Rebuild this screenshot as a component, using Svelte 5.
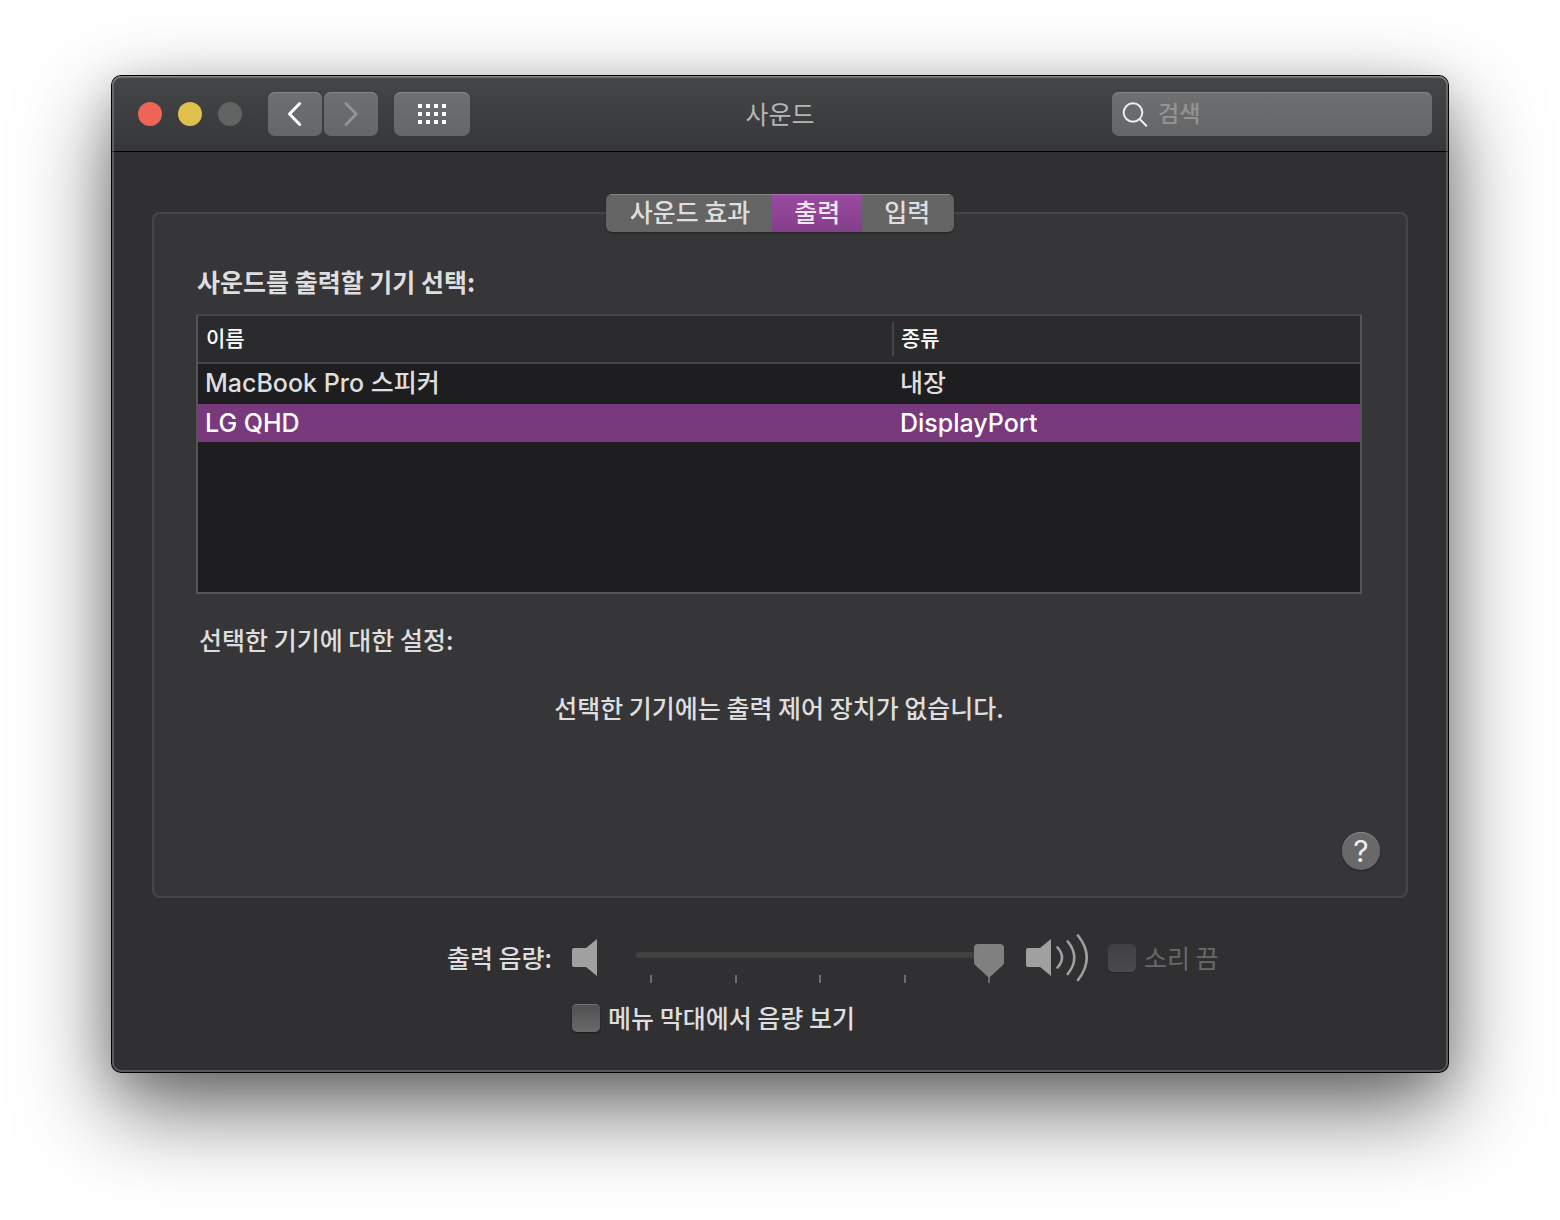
<script>
  const tabs = ['사운드 효과', '출력', '입력'];
  const devices = [
    { name: 'MacBook Pro 스피커', kind: '내장' },
    { name: 'LG QHD', kind: 'DisplayPort' }
  ];
  const gridDots = [0, 8, 16, 24].flatMap((x) => [0, 8, 16].map((y) => ({ x, y })));

  let activeTab = $state('출력');
  let selected = $state('LG QHD');
  let volume = $state(100);
</script>

<div class="desktop">
  <main class="window">
    <header class="toolbar">
      <div class="controls">
        <div class="lights">
          <button class="light close" aria-label="닫기"></button>
          <button class="light minimize" aria-label="최소화"></button>
          <button class="light zoom" aria-label="확대" disabled></button>
        </div>
        <div class="nav">
          <button class="tool" aria-label="뒤로">
            <svg width="16" height="26" viewBox="0 0 16 26" fill="none" stroke="#fff" stroke-width="3" stroke-linecap="round" stroke-linejoin="round"><path d="M12.700 2.500 2.500 13l10.200 10.500" /></svg>
          </button>
          <button class="tool" aria-label="앞으로" disabled>
            <svg width="16" height="26" viewBox="0 0 16 26" fill="none" stroke="#929394" stroke-width="3" stroke-linecap="round" stroke-linejoin="round"><path d="M3 2.500 13.200 13 3 23.500" /></svg>
          </button>
        </div>
        <button class="tool all" aria-label="모두 보기">
          <svg width="28" height="20" viewBox="0 0 28 20" fill="#fff">
            {#each gridDots as dot}
              <rect x={dot.x} y={dot.y} width="4" height="4" />
            {/each}
          </svg>
        </button>
      </div>
      <h1>사운드</h1>
      <label class="search">
        <svg width="26" height="26" viewBox="0 0 26 26" fill="none" stroke="#ededed" stroke-width="2"><circle cx="11" cy="11.500" r="9.300" /><path d="m17.500 18 7.300 7.300" /></svg>
        <input type="search" placeholder="검색" aria-label="검색" />
      </label>
    </header>

    <div class="content">
      <div class="tabs" role="tablist">
        {#each tabs as tab}
          <button role="tab" aria-selected={activeTab === tab} class:active={activeTab === tab} onclick={() => (activeTab = tab)}>{tab}</button>
        {/each}
      </div>

      <section class="panel">
        <div class="inner">
          <h2>사운드를 출력할 기기 선택:</h2>
          <div class="list">
            <table>
              <thead>
                <tr><th class="name">이름</th><th class="kind"><span>종류</span></th></tr>
              </thead>
              <tbody>
                {#each devices as device}
                  <tr class:selected={selected === device.name} onclick={() => (selected = device.name)}>
                    <td>{device.name}</td><td>{device.kind}</td>
                  </tr>
                {/each}
              </tbody>
            </table>
          </div>
          <p class="settings">선택한 기기에 대한 설정:</p>
          <p class="message">선택한 기기에는 출력 제어 장치가 없습니다.</p>
        </div>
        <button class="help" aria-label="도움말">?</button>
      </section>

      <div class="output">
        <label class="caption" for="volume">출력 음량:</label>
        <div class="volume">
          <svg width="26" height="48" viewBox="0 0 26 48" fill="#a0a0a0"><path d="M2 14h12L25 5v37L14 33H2a2 2 0 0 1-2-2V16a2 2 0 0 1 2-2z" /></svg>
          <div class="slider">
            <input id="volume" type="range" min="0" max="100" bind:value={volume} />
            <div class="ticks" aria-hidden="true"><i></i><i></i><i></i><i></i><i></i></div>
          </div>
          <svg width="64" height="48" viewBox="0 0 64 48" fill="#a0a0a0">
            <path d="M2 14h12L25 5v37L14 33H2a2 2 0 0 1-2-2V16a2 2 0 0 1 2-2z" />
            <path d="M31.500 13.500q9 10 0 20M41.800 7.500q13 16 0 32.500M52 1.500q17.500 22 0 44.500" fill="none" stroke="#a0a0a0" stroke-width="2.600" stroke-linecap="round" />
          </svg>
          <label class="check off"><input type="checkbox" disabled /><span>소리 끔</span></label>
        </div>
        <label class="check menu"><input type="checkbox" /><span>메뉴 막대에서 음량 보기</span></label>
      </div>
    </div>
  </main>
</div>

<style>
  :global(body) {
    background: #fff;
  }
  .desktop {
    padding: 76px 112px 148px;
    font-family: 'Noto Sans CJK KR', sans-serif;
    font-size: 25px;
    font-weight: 500;
    line-height: 30px;
    color: #dededf;
  }
  h1,
  h2,
  p {
    margin: 0;
    font-size: inherit;
  }
  button,
  input {
    font: inherit;
    color: inherit;
    margin: 0;
    padding: 0;
    border: 0;
  }
  svg {
    display: block;
    flex: none;
  }
  .window {
    position: relative;
    border-radius: 9px;
    background: #303032;
    box-shadow:
      0 0 0 1px #000,
      0 10px 40px rgba(0, 0, 0, 0.15),
      0 36px 90px rgba(0, 0, 0, 0.6);
  }
  /* Light rim over the inside edge of the window */
  .window::after {
    content: '';
    position: absolute;
    inset: 0;
    border-radius: 9px;
    box-shadow:
      inset 0 1px 0 #858686,
      inset 0 0 0 2px rgba(255, 255, 255, 0.2);
    pointer-events: none;
  }
  .toolbar {
    display: grid;
    grid-template-columns: 1fr auto 1fr;
    align-items: center;
    box-sizing: border-box;
    height: 76px;
    padding: 0 16px;
    border-bottom: 1px solid #000;
    border-radius: 9px 9px 0 0;
    background: linear-gradient(#454647, #363738);
  }
  .controls {
    display: flex;
    align-items: center;
    padding-left: 10px;
  }
  .lights {
    display: flex;
    gap: 16px;
    margin-right: 26px;
  }
  .light {
    width: 24px;
    height: 24px;
    border-radius: 50%;
  }
  .close {
    background: #ee6558;
  }
  .minimize {
    background: #e0c04c;
  }
  .zoom {
    background: #626363;
  }
  .nav {
    display: flex;
    gap: 2px;
    margin-right: 16px;
  }
  .tool {
    display: flex;
    align-items: center;
    justify-content: center;
    width: 54px;
    height: 44px;
    border-radius: 7px;
  }
  .tool,
  .search {
    background: linear-gradient(#6e6f71, #656667);
    box-shadow: inset 0 1px 0 #858688;
  }
  .all {
    width: 76px;
  }
  h1 {
    padding-bottom: 2px;
    font-weight: 400;
    color: #b4b5b5;
  }
  .search {
    display: flex;
    justify-self: end;
    align-items: center;
    gap: 10px;
    box-sizing: border-box;
    width: 320px;
    height: 44px;
    padding: 0 10px;
    border-radius: 7px;
    font-size: 23px;
  }
  .search input {
    flex: 1;
    min-width: 0;
    height: 34px;
    padding-bottom: 4px;
    background: none;
    outline: none;
    appearance: none;
  }
  .search input::placeholder {
    color: #929394;
    opacity: 1;
  }
  .content {
    padding: 42px 40px 38px;
  }
  .tabs {
    position: relative;
    display: flex;
    width: max-content;
    margin: 0 auto -20px;
    border-radius: 6px;
    box-shadow: 0 1px 2px rgba(0, 0, 0, 0.4);
    overflow: hidden;
  }
  .tabs button {
    height: 38px;
    padding: 0 22px 4px;
    background: #646465;
    box-shadow: inset 0 1px 0 #858586;
  }
  .tabs button:first-child {
    padding-left: 24px;
  }
  .tabs button:last-child {
    padding-right: 24px;
  }
  .tabs .active {
    background: linear-gradient(#9b4aa1, #843f89);
    box-shadow: inset 0 1px 0 #ac6ab1;
    color: #f0e6f1;
  }
  .panel {
    display: flex;
    flex-direction: column;
    padding: 52px 26px 26px 24px;
    border: 2px solid #464648;
    border-radius: 8px;
    background: #363638;
  }
  .inner {
    padding: 0 18px;
  }
  h2 {
    margin-bottom: 18px;
    padding-left: 1px;
    font-weight: 700;
  }
  .list {
    box-sizing: border-box;
    min-height: 280px;
    border: 2px solid #555557;
    border-top-color: #464648;
    background: #1e1e20;
  }
  table {
    width: 100%;
    border-spacing: 0;
    table-layout: fixed;
  }
  th {
    box-sizing: border-box;
    height: 48px;
    padding: 0;
    border-bottom: 2px solid #464648;
    background: #2b2b2d;
    text-align: left;
    font-size: 21px;
    font-weight: 500;
    color: #fff;
  }
  .name {
    padding: 0 0 4px 8px;
  }
  .kind {
    width: 468px;
  }
  .kind span {
    display: block;
    padding: 0 0 4px 7px;
    border-left: 2px solid #464648;
  }
  td {
    height: 38px;
    padding: 0 7px;
    border-bottom: 2px solid transparent;
    background-clip: padding-box;
    font-family: Inter, 'Noto Sans CJK KR', sans-serif;
  }
  td:last-child {
    padding-left: 8px;
  }
  .selected td {
    background-color: #78397d;
    color: #fff;
  }
  .settings {
    margin: 30px 0 38px 3px;
  }
  .message {
    text-align: center;
  }
  .help {
    align-self: flex-end;
    width: 38px;
    height: 38px;
    margin-top: 110px;
    border-radius: 50%;
    background: #69696b;
    box-shadow:
      inset 0 1px 0 #858587,
      0 1px 2px rgba(0, 0, 0, 0.4);
    font-family: Inter, sans-serif;
    font-size: 30px;
    font-weight: 400;
    color: #f0f0f0;
  }
  .output {
    display: grid;
    grid-template-columns: 400fr 836fr;
    gap: 20px;
    align-items: center;
    margin-top: 36px;
  }
  .caption {
    padding-bottom: 2px;
    text-align: right;
  }
  .volume {
    display: flex;
    height: 48px;
  }
  .slider {
    width: 368px;
    margin: 18px 22px 0 38px;
  }
  .slider input {
    display: block;
    width: 100%;
    height: 6px;
    border-radius: 3px;
    background: #404041;
    appearance: none;
  }
  .slider input::-webkit-slider-runnable-track {
    height: 6px;
  }
  .slider input::-webkit-slider-thumb {
    width: 30px;
    height: 34px;
    margin-top: -8px;
    background: #808080;
    clip-path: path('M4 0h22a4 4 0 0 1 4 4v14q0 2-1 3L17 32q-2 2-4 0L1 21q-1-1-1-3V4a4 4 0 0 1 4-4z');
    appearance: none;
  }
  .ticks {
    display: flex;
    justify-content: space-between;
    padding: 17px 14px 0;
  }
  .ticks i {
    width: 2px;
    height: 8px;
    background: #6c6c6d;
  }
  .check {
    display: flex;
    align-items: center;
    gap: 8px;
  }
  .check span {
    padding-bottom: 2px;
  }
  .check input {
    width: 28px;
    height: 28px;
    border-radius: 5px;
    background: linear-gradient(#505052, #69696a);
    box-shadow:
      inset 0 1px 0 #737374,
      0 1px 2px rgba(0, 0, 0, 0.5);
    appearance: none;
  }
  .off {
    margin-left: 18px;
    font-weight: 400;
    color: #69696a;
  }
  .off input {
    background: linear-gradient(#404042, #4b4b4d);
    box-shadow: 0 1px 1px rgba(0, 0, 0, 0.2);
  }
  .menu {
    grid-column: 2;
  }
</style>
